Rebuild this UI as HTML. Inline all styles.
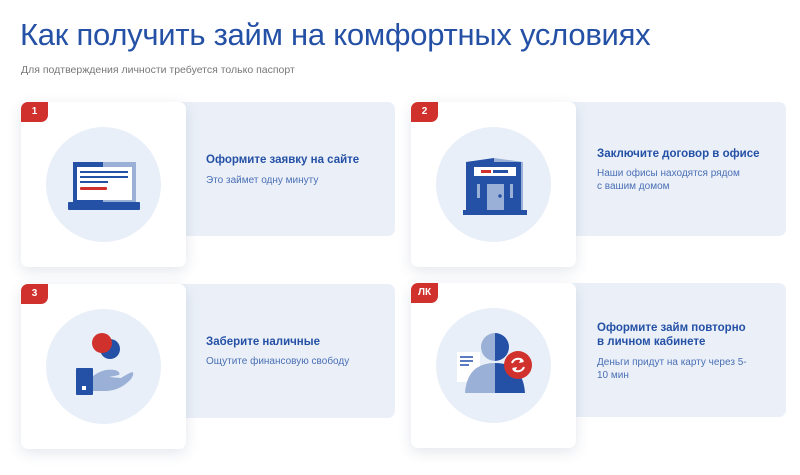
<!DOCTYPE html>
<html><head><meta charset="utf-8"><style>
*{margin:0;padding:0;box-sizing:border-box}
body{width:800px;height:475px;background:#fff;font-family:"Liberation Sans",sans-serif;position:relative;overflow:hidden}
h1{position:absolute;left:20px;top:17px;font-size:31px;font-weight:normal;color:#2450a5;letter-spacing:-0.25px;white-space:nowrap}
.sub{position:absolute;left:21px;top:64px;font-size:10.5px;color:#777}
.panel{position:absolute;background:#ebf0f8;border-radius:7px}
.card{position:absolute;width:165px;height:165px;background:#fff;border-radius:7px;box-shadow:0 4px 14px rgba(40,60,110,.13)}
.badge{position:absolute;left:0;top:0;width:27px;height:20px;background:#d0312d;color:#fff;font-size:10px;font-weight:bold;text-align:center;line-height:20px;border-radius:7px 0 7px 0}
.circ{position:absolute;left:25px;top:25px;width:115px;height:115px;border-radius:50%;background:#e9eff8}
.card svg{position:absolute;left:0;top:0}
.t{position:absolute;font-size:11.5px;font-weight:bold;color:#2450a5;line-height:14px}
.d{position:absolute;font-size:10px;color:#4a6fb5;line-height:13px}
</style></head><body>
<h1>Как получить займ на комфортных условиях</h1>
<div class="sub">Для подтверждения личности требуется только паспорт</div>

<div class="panel" style="left:175px;top:102px;width:220px;height:134px"></div>
<div class="card" style="left:21px;top:102px"><div class="circ"></div>
<svg width="165" height="165"><rect x="52" y="60" width="30" height="40" fill="#2450a5"/><rect x="82" y="60" width="33" height="40" fill="#9bb0d6"/><rect x="56" y="65" width="55" height="33" fill="#fff"/><rect x="59" y="69" width="48" height="2" fill="#2450a5"/><rect x="59" y="74" width="48" height="2" fill="#2450a5"/><rect x="59" y="79" width="28" height="2" fill="#2450a5"/><rect x="59" y="85" width="27" height="3" rx="1" fill="#d0312d"/><rect x="47" y="100" width="72" height="8" rx="1" fill="#2450a5"/></svg>
<div class="badge">1</div></div>
<div class="t" style="left:206px;top:153px">Оформите заявку на сайте</div>
<div class="d" style="left:206px;top:174px">Это займет одну минуту</div>

<div class="panel" style="left:566px;top:102px;width:220px;height:134px"></div>
<div class="card" style="left:411px;top:102px"><div class="circ"></div>
<svg width="165" height="165"><path d="M55 60 L83 56 L83 112 L55 112Z" fill="#2450a5"/><path d="M83 56 L112 60 L112 112 L83 112Z" fill="#9bb0d6"/><rect x="58" y="60" width="52" height="52" fill="#2450a5"/><rect x="63" y="65" width="42" height="9" fill="#fff"/><rect x="70" y="68" width="10" height="3" fill="#d0312d"/><rect x="82" y="68" width="15" height="3" fill="#2450a5"/><rect x="66" y="82" width="3" height="14" fill="#9bb0d6"/><rect x="99" y="82" width="3" height="14" fill="#9bb0d6"/><rect x="76" y="82" width="17" height="28" fill="#9bb0d6"/><circle cx="89" cy="94" r="1.7" fill="#2450a5"/><rect x="52" y="108" width="64" height="5" fill="#2450a5"/></svg>
<div class="badge">2</div></div>
<div class="t" style="left:597px;top:147px">Заключите договор в офисе</div>
<div class="d" style="left:597px;top:167px;width:170px">Наши офисы находятся рядом<br>с вашим домом</div>

<div class="panel" style="left:175px;top:284px;width:220px;height:134px"></div>
<div class="card" style="left:21px;top:284px"><div class="circ"></div>
<svg width="165" height="165"><path d="M72 92 Q82 84 94 86 Q100 88 98 91 L88 93 L100 94 Q106 90 111 88 Q114 89 110 95 Q100 106 86 107 L72 107Z" fill="#9bb0d6"/><rect x="55" y="84" width="17" height="27" rx="1" fill="#2450a5"/><rect x="61" y="102" width="4" height="4" fill="#fff"/><circle cx="89" cy="65" r="10" fill="#2450a5"/><circle cx="81" cy="59" r="10" fill="#d0312d"/></svg>
<div class="badge">3</div></div>
<div class="t" style="left:206px;top:335px">Заберите наличные</div>
<div class="d" style="left:206px;top:355px">Ощутите финансовую свободу</div>

<div class="panel" style="left:566px;top:283px;width:220px;height:134px"></div>
<div class="card" style="left:411px;top:283px"><div class="circ"></div>
<svg width="165" height="165"><rect x="46" y="69" width="23" height="30" fill="#fff"/><rect x="49" y="73" width="13" height="2" fill="#5a7bbf"/><rect x="49" y="77" width="13" height="2" fill="#5a7bbf"/><rect x="49" y="81" width="9" height="2" fill="#5a7bbf"/><path d="M84 50 A14 14 0 0 0 84 78Z" fill="#9bb0d6"/><path d="M84 50 A14 14 0 0 1 84 78Z" fill="#2450a5"/><path d="M54 110 Q56 80 84 80 L84 110Z" fill="#9bb0d6"/><path d="M84 80 Q112 80 114 110 L84 110Z" fill="#2450a5"/><circle cx="107" cy="82" r="14" fill="#d0312d"/><path d="M101 80 A6.5 6.5 0 0 1 112 78 M113 84 A6.5 6.5 0 0 1 102 86" stroke="#fff" stroke-width="2" fill="none"/><path d="M110 75 L113 79 L108 80Z M104 89 L101 85 L106 84Z" fill="#fff"/></svg>
<div class="badge">ЛК</div></div>
<div class="t" style="left:597px;top:321px">Оформите займ повторно<br>в личном кабинете</div>
<div class="d" style="left:597px;top:356px">Деньги придут на карту через 5-<br>10 мин</div>
</body></html>
